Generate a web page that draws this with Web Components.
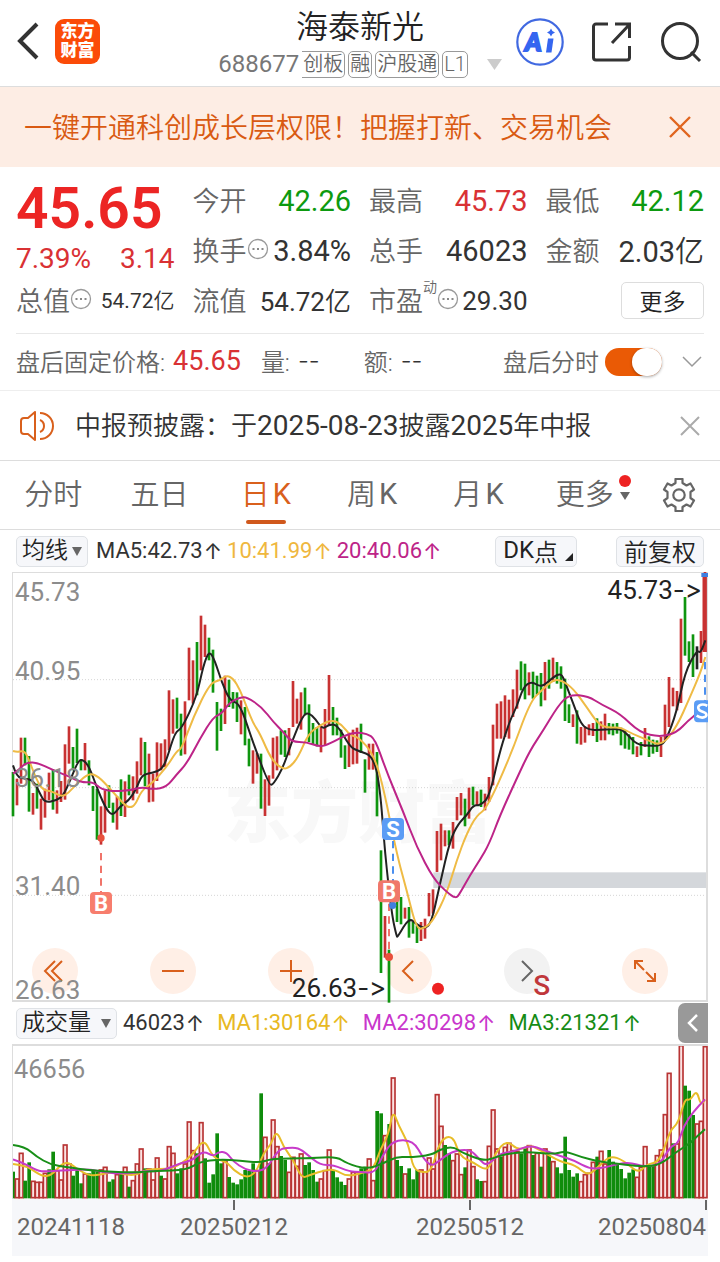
<!DOCTYPE html>
<html lang="zh-CN">
<head>
<meta charset="utf-8">
<meta name="viewport" content="width=device-width, initial-scale=1">
<title>海泰新光 688677</title>
<style>
  body {
    margin: 0;
    background: #fff;
    color: #333;
    font-family: Roboto, "Noto Sans CJK SC", sans-serif;
    font-size: 24px;
  }
</style>
</head>
<body>
<stock-page></stock-page>

<script>
// shared rules, every shadow root starts with them
const BASE = `
  * { box-sizing: border-box; }
  button, select, input { margin: 0; padding: 0; border: 0; background: none; font: inherit; color: inherit; }
  button { display: inline-flex; align-items: center; justify-content: center; cursor: pointer; }
  svg { display: block; fill: none; }
`;

class BaseElement extends HTMLElement {
  constructor() {
    super();
    this.attachShadow({ mode: 'open' });
  }

  connectedCallback() {
    this.shadowRoot.innerHTML = `<style>${BASE}${this.styles()}</style>${this.render()}`;
  }

  styles() { return ''; }
  render() { return ''; }
}

class StockTag extends BaseElement {
  styles() {
    return `
      :host { display: block; border: 1px solid #999; border-radius: 5px; padding: 0 1px;
        font-size: 20px; line-height: 25px; color: #666; font-weight: 350; }
      :host([cut]) { border-left: 0; border-top-left-radius: 0; border-bottom-left-radius: 0; }
    `;
  }
  render() { return '<slot></slot>'; }
}
customElements.define('stock-tag', StockTag);

class StockHeader extends BaseElement {
  styles() {
    return `
      :host { display: grid; grid-template-columns: 1fr auto 1fr; align-items: center;
        height: 87px; border-bottom: 1px solid #ddd; }
      .left { display: flex; align-items: center; gap: 16px; padding: 0 0 4px 17px; }
      .logo { width: 45px; height: 45px; border-radius: 9px; background: #fb4b08; color: #fff; text-decoration: none;
        font-size: 17px; line-height: 19px; font-weight: 900; text-align: center; padding-top: 3px; }
      .mid { text-align: center; }
      h1 { margin: 0; font-size: 32px; line-height: 48px; font-weight: 350; color: #222; }
      .code { display: flex; align-items: center; gap: 3px; font-size: 24px; color: #777; line-height: 27px; margin-bottom: 6px; }
      .code button { margin-left: 16px; }
      .right { display: flex; align-items: center; justify-content: flex-end; gap: 28px; padding: 0 18px 3px 0; }
    `;
  }
  render() {
    return `
      <div class="left">
        <button aria-label="返回"><svg width="22" height="38" viewBox="0 0 22 38" stroke="#333" stroke-width="4"><path d="M20 2 3 19l17 17"/></svg></button>
        <a class="logo" href="#">东方<br>财富</a>
      </div>
      <div class="mid">
        <h1>海泰新光</h1>
        <div class="code">
          <span>688677</span>
          <stock-tag cut>创板</stock-tag><stock-tag>融</stock-tag><stock-tag>沪股通</stock-tag><stock-tag>L1</stock-tag>
          <button aria-label="展开"><svg width="15" height="11" viewBox="0 0 15 11"><path d="M0 0h15L7.500 11z" fill="#ccc"/></svg></button>
        </div>
      </div>
      <div class="right">
        <button aria-label="Ai">
          <svg width="48" height="48" viewBox="0 0 48 48">
            <circle cx="24" cy="24" r="22.700" stroke="#4169e1" stroke-width="2.200"/>
            <text x="9" y="33" fill="#3566f0" stroke="#3566f0" stroke-width="2" font-size="25" font-weight="900" font-style="italic" font-family="Lato, sans-serif">A</text>
            <path d="M32 20.500h5.500L35.500 34.500H30z" fill="#3566f0"/>
            <path d="M35 10.500q.8 3 4 4-3.200 1-4 4-.8-3-4-4 3.200-1 4-4z" fill="#3566f0"/>
          </svg>
        </button>
        <button aria-label="分享">
          <svg width="40" height="40" viewBox="0 0 40 40" stroke="#333" stroke-width="3">
            <path d="M16 2H4a2.500 2.500 0 0 0-2.500 2.500v31A2.500 2.500 0 0 0 4 38h31a2.500 2.500 0 0 0 2.500-2.500V24M20 21 37 3M23 2h14.500v14"/>
          </svg>
        </button>
        <button aria-label="搜索">
          <svg width="42" height="42" viewBox="0 0 42 42" stroke="#333" stroke-width="3">
            <circle cx="20" cy="20" r="17.500"/><path d="m31 31 9 9"/>
          </svg>
        </button>
      </div>
    `;
  }
}
customElements.define('stock-header', StockHeader);

class PromoBanner extends BaseElement {
  styles() {
    return `
      :host { display: flex; align-items: center; justify-content: space-between; height: 80px;
        padding: 0 28px 0 24px; background: #fdede4; color: #d95a12; }
      a { color: inherit; text-decoration: none; font-size: 28px; white-space: nowrap; font-weight: 350; padding-bottom: 2px; }
    `;
  }
  render() {
    return `
      <a href="#"><slot></slot></a>
      <button aria-label="关闭"><svg width="24" height="24" viewBox="0 0 24 24" stroke="#e0651f" stroke-width="2.400"><path d="m2 2 20 20M22 2 2 22"/></svg></button>
    `;
  }
}
customElements.define('promo-banner', PromoBanner);

// one label / value pair, attributes: label, sup, info, tone, unit
class QuoteCell extends BaseElement {
  styles() {
    return `
      :host { display: flex; align-items: center; justify-content: space-between; height: 50px;
        font-size: 29px; color: #333; white-space: nowrap; }
      .label { display: flex; align-items: center; font-size: 27px; color: #666; font-weight: 350; padding-bottom: 4px; }
      .sup { align-self: flex-start; font-size: 14px; line-height: 14px; }
      :host([tone=up]) .value { color: #d93134; }
      :host([tone=down]) .value { color: #0d9a10; }
      :host([small]) .value { font-size: 21px; }
      :host([mid]) .value { font-size: 26px; }
      :host([unit]) .value { padding-bottom: 4px; }
      .unit { font-weight: 350; }
    `;
  }
  render() {
    const info = this.hasAttribute('info')
      ? `<svg width="22" height="22" viewBox="0 0 22 22"><circle cx="11" cy="11" r="9.500" stroke="#999" stroke-width="1.300"/><path d="M5.500 10h2v2h-2zm4.500 0h2v2h-2zm4.500 0h2v2h-2z" fill="#888"/></svg>` : '';
    const sup = this.getAttribute('sup');
    const unit = this.getAttribute('unit') || '';
    return `
      <span class="label">${this.getAttribute('label')}${sup ? `<span class="sup">${sup}</span>` : ''}${info}</span>
      <span class="value"><slot></slot><span class="unit">${unit}</span></span>
    `;
  }
}
customElements.define('quote-cell', QuoteCell);

class QuotePanel extends BaseElement {
  styles() {
    return `
      :host { display: grid; grid-template-columns: repeat(4, 1fr); column-gap: 18px; margin: 0 16px; padding: 9px 0 7px;
        border-bottom: 1px solid #e8e8e8; }
      .price { font-size: 57px; line-height: 66px; font-weight: 600; color: #ec2524; }
      .change { display: flex; justify-content: space-between; font-size: 28px; line-height: 34px; color: #d93134; }
      .more { width: 83px; height: 37px; margin: 6px 0 7px; padding-bottom: 2px; border: 1px solid #ddd; border-radius: 5px; font-size: 23px; color: #222; justify-self: end; font-weight: 350; }
      .col { display: grid; }
    `;
  }
  render() {
    return `
      <div>
        <div class="price">45.65</div>
        <div class="change"><span>7.39%</span><span>3.14</span></div>
        <quote-cell label="总值" info small unit="亿">54.72</quote-cell>
      </div>
      <div>
        <quote-cell label="今开" tone="down">42.26</quote-cell>
        <quote-cell label="换手" info>3.84%</quote-cell>
        <quote-cell label="流值" mid unit="亿">54.72</quote-cell>
      </div>
      <div>
        <quote-cell label="最高" tone="up">45.73</quote-cell>
        <quote-cell label="总手">46023</quote-cell>
        <quote-cell label="市盈" sup="动" info mid>29.30</quote-cell>
      </div>
      <div class="col">
        <quote-cell label="最低" tone="down">42.12</quote-cell>
        <quote-cell label="金额" unit="亿">2.03</quote-cell>
        <button class="more">更多</button>
      </div>
    `;
  }
}
customElements.define('quote-panel', QuotePanel);

class AfterHours extends BaseElement {
  styles() {
    return `
      :host { display: flex; align-items: center; height: 57px; padding: 0 18px 0 16px; border-bottom: 1px solid #eee;
        font-size: 24px; color: #666; white-space: nowrap; font-weight: 350; }
      .fixed b { font-weight: 400; font-size: 27px; color: #d93134; }
      .fixed, .pair { display: flex; align-items: center; gap: 8px; padding-bottom: 3px; }
      .pair { margin-left: 20px; }
      .pair + .pair { margin-left: 44px; }
      .pair i { font-style: normal; font-family: Inter, sans-serif; color: #333; }
      label { display: flex; align-items: center; gap: 6px; margin-left: auto; }
      label span { padding-bottom: 3px; }
      input { appearance: none; display: flex; width: 57px; height: 28px; border-radius: 14px; background: #ea5a05; justify-content: flex-end; }
      input::before { content: ""; width: 30px; height: 28px; border-radius: 14px; background: #fff; box-shadow: 0 1px 3px #0005; }
      input:not(:checked) { background: #ccc; justify-content: flex-start; }
      button { margin-left: 20px; }
    `;
  }
  render() {
    return `
      <span class="fixed">盘后固定价格: <b>45.65</b></span>
      <span class="pair">量: <i>--</i></span>
      <span class="pair">额: <i>--</i></span>
      <label><span>盘后分时</span><input type="checkbox" role="switch" checked></label>
      <button aria-label="展开"><svg width="20" height="12" viewBox="0 0 20 12" stroke="#999" stroke-width="1.500"><path d="m1 1 9 9 9-9"/></svg></button>
    `;
  }
}
customElements.define('after-hours', AfterHours);

class NoticeBar extends BaseElement {
  styles() {
    return `
      :host { display: flex; align-items: center; height: 70px; padding: 0 20px; border-bottom: 1px solid #ddd; }
      a { margin-left: 21px; padding-bottom: 4px; color: #333; text-decoration: none; font-size: 26px; white-space: nowrap; font-weight: 350; }
      ::slotted(span) { font-size: 28px; font-weight: 400; }
      button { margin-left: auto; }
    `;
  }
  render() {
    return `
      <svg width="34" height="30" viewBox="0 0 34 30" stroke="#d9601c" stroke-width="2">
        <path d="M1 10q0-3 3-3h4l7-6v28l-7-6H4q-3 0-3-3z" stroke-linejoin="round"/>
        <path d="M20 9a6.500 6.500 0 0 1 0 12M20 2a13 13 0 0 1 0 26"/>
      </svg>
      <a href="#"><slot></slot></a>
      <button aria-label="关闭"><svg width="20" height="20" viewBox="0 0 20 20" stroke="#aaa" stroke-width="2"><path d="m1 1 18 18M19 1 1 19"/></svg></button>
    `;
  }
}
customElements.define('notice-bar', NoticeBar);

class PeriodTabs extends BaseElement {
  styles() {
    return `
      :host { display: flex; height: 69px; border-bottom: 1px solid #ddd; color: #666; font-size: 29px; font-weight: 350; }
      .tabs { display: flex; flex: 1; }
      .tabs button { flex: 1 1 0; position: relative; gap: 3px; padding-bottom: 6px; }
      .tabs button span { font-weight: 400; padding-top: 4px; }
      .on { color: #d9601c; }
      .on::after { content: ""; position: absolute; bottom: 5px; width: 40px; height: 4px; border-radius: 2px; background: #d0581c; }
      .dot { position: absolute; left: 87px; top: 14px; }
      .gear { width: 82px; }
    `;
  }
  render() {
    return `
      <div class="tabs" role="tablist">
        <button role="tab">分时</button>
        <button role="tab">五日</button>
        <button role="tab" class="on" aria-selected="true">日<span>K</span></button>
        <button role="tab">周<span>K</span></button>
        <button role="tab">月<span>K</span></button>
        <button role="tab">更多<svg class="dot" width="12" height="26" viewBox="0 0 12 26"><circle cx="6" cy="6" r="6" fill="#ee2222"/><path d="M1 17h10L6 25z" fill="#666"/></svg></button>
      </div>
      <button class="gear" aria-label="设置">
        <svg width="34" height="34" viewBox="0 0 34 34" stroke="#666" stroke-width="2.200" stroke-linejoin="round">
          <circle cx="17" cy="17" r="5.700"/>
          <path d="M13.500 1h7v4l4 2.500 4-2 3.500 6-3.500 2.500v6l3.500 2.500-3.500 6-4-2-4 2.500v4h-7v-4l-4-2.500-4 2-3.500-6L5.500 20v-6L2 11.500l3.500-6 4 2L13.500 5z"/>
        </svg>
      </button>
    `;
  }
}
customElements.define('period-tabs', PeriodTabs);

// drop-down that picks the indicator
class IndicatorSelect extends BaseElement {
  styles() {
    return `
      :host { display: block; position: relative; color: #222; font-weight: 350; }
      select { appearance: none; display: block; height: 31px; padding: 0 19px 0 5px; border: 1px solid #dfe2e6; border-radius: 5px;
        background: #f6f7fa; font-size: 23px; line-height: 28px; }
      :host([wide]) select { padding-right: 25px; }
      svg { position: absolute; right: 6px; top: 11px; pointer-events: none; }
    `;
  }
  render() {
    const name = this.getAttribute('name');
    return `<select aria-label="指标"><option>${name}</option></select>
      <svg width="10" height="9" viewBox="0 0 10 9"><path d="M0 0h10L5 9z" fill="#666"/></svg>`;
  }
}
customElements.define('indicator-select', IndicatorSelect);

class MaValue extends BaseElement {
  styles() {
    return `
      :host { display: flex; align-items: center; gap: 1px; font-size: 22px; line-height: 28px; white-space: nowrap; }
      .arrow { font-family: Inter, sans-serif; }
    `;
  }
  render() { return '<slot></slot><span class="arrow">↑</span>'; }
}
customElements.define('ma-value', MaValue);

// drawing units: three per pixel, left edge of the box at 36
const STEP = 12;
const FIRST = 39;
const RED = '#c83232', GREEN = '#0f950f';

const path = (pts) => {
  // smooth polyline, quadratic through the middle points
  const p = pts.trim().split(/\s+/).map((s) => s.split(',').map(Number));
  let d = `M${p[0]}`;
  for (let i = 1; i < p.length - 1; i++) {
    d += `Q${p[i]} ${(p[i][0] + p[i + 1][0]) / 2},${(p[i][1] + p[i + 1][1]) / 2}`;
  }
  return d + `L${p[p.length - 1]}`;
};

// colour, high, low
const CANDLES = `
g605-738 r625-705 r502-640 g502-585 g557-724 r668-733 g640-715 r685-778 r655-742 r607-690
g597-718 r660-730 r632-695 r522-688 r468-580 g530-600 g475-578 g567-600 r518-600 g570-645
g647-722 g655-808 r708-823 r660-787 g645-713 g697-757 r678-778 g627-737 r633-740 g613-675
r618-690 r573-670 r502-615 g515-648 r550-696 r610-694 r516-632 r519-600 r507-590 r360-540
r387-490 g382-475 g430-556 r393-552 r232-390 r270-400 g215-375 r136-300 r163-260 g202-270
g238-367 g395-541 g415-482 r316-461 g328-410 g365-415 g366-455 r390-492 g410-525 g505-588
r540-640 r548-610 g550-715 r627-737 r615-706 r502-625 r498-600 g480-553 g480-560 r473-555
r332-470 r385-460 r366-478 g352-435 g402-515 g458-522 g470-528 r468-546 r416-525 r314-465
g410-495 g442-495 g478-562 g525-596 r487-590 r478-582 r472-580 g460-548 g567-667 r520-598
r520-598 g545-738 g840-1208 r1037-1162 g1138-1297 g985-1010 g975-1055 g980-1062 r1012-1045 g1010-1102
g1055-1090 g1065-1118 r1055-1112 r1045-1105 r968-1038 r957-1030 r782-905 r760-870 r780-828 g780-825
r755-835 r680-750 r668-735 g685-768 r652-745 g649-705 r663-705 g658-710 r670-720 r620-695
r463-645 r400-505 r393-505 r375-500 r388-505 r357-440 r298-415 g273-360 g280-387 r306-375
g304-385 g316-373 g308-408 r275-390 g268-355 r262-335 g275-340 g288-355 g325-452 g402-458
r432-470 g420-520 r470-523 r468-517 r462-495 r458-497 g444-515 r453-510 r430-510 g458-492
g460-495 g458-490 g472-525 g480-535 g492-538 g500-552 r528-560 g515-555 r473-530 g498-560
g508-550 g510-545 r500-560 r403-510 r320-470 r352-408 r362-420 r145-398 g80-256 g213-275
g192-320 k228-297 r182-278 r5-245`;

const MA5 = `39,585 50,620 75,625 100,630 120,670 135,697 170,690 190,675 210,632 235,570 250,568 268,590 290,650 315,710 337,738
360,708 385,692 410,655 425,613 460,607 485,597 500,568 525,485 545,475 590,380 610,285 628,240 645,272 665,335 690,392 720,400
760,520 808,645 820,642 850,590 875,515 910,432 927,428 945,445 968,477 985,463 1012,462 1050,530 1075,542 1120,557 1140,650
1155,850 1175,1030 1190,1100 1194,1098 1227,1042 1250,1062 1275,1076 1295,1055 1320,940 1350,810 1375,760 1400,735 1420,705
1440,705 1468,680 1500,540 1530,450 1550,410 1570,350 1595,333 1625,352 1660,320 1683,308 1695,335 1720,400 1743,463 1770,480
1805,478 1860,475 1880,490 1910,523 1950,527 1985,525 2000,505 2030,425 2055,305 2090,240 2102,248 2116,210`;
const MA10 = `39,542 50,545 68,542 80,550 110,630 130,660 155,662 190,682 220,652 265,607 295,618 330,655 375,705 390,712 405,705
425,660 455,640 500,590 530,542 545,535 580,440 630,338 660,330 680,315 700,325 720,358 740,410 760,460 780,490 815,570 850,597
870,590 895,560 925,490 960,465 995,448 1025,462 1050,495 1075,500 1120,550 1150,650 1190,850 1220,960 1250,1078 1275,1073
1300,1050 1340,970 1370,870 1400,790 1430,735 1460,715 1530,560 1590,395 1625,360 1660,328 1685,330 1720,355 1760,410 1795,462
1825,473 1860,470 1885,485 1940,508 1985,527 2030,470 2070,380 2100,310 2116,260`;
const MA20 = `39,610 60,595 80,575 115,578 160,600 200,615 245,637 280,635 305,658 345,663 390,660 425,650 460,657 500,650 530,612
560,580 600,505 640,440 665,430 690,395 720,382 740,380 785,410 820,455 850,485 875,515 920,515 960,530 990,520 1040,493 1070,486
1100,490 1125,505 1160,605 1210,725 1250,830 1300,925 1340,965 1368,985 1380,968 1410,915 1440,868 1468,820 1500,735 1550,625
1590,540 1630,480 1675,405 1708,372 1765,378 1805,403 1860,430 1920,487 1980,500 2030,487 2065,450 2095,427 2116,390`;

class KlineChart extends BaseElement {
  styles() {
    return `
      :host { display: block; position: relative; margin: 0 12px; border: 1px solid #ddd; border-width: 1px 2px 2px 1px; }
      .chart { position: relative; width: 100%; overflow: visible; pointer-events: none; font-family: inherit; }
      .ext { font-family: Inter, sans-serif; font-size: 78px; font-feature-settings: "calt" 0; }
      .tools { position: absolute; left: 19px; right: 38px; bottom: 6px; display: flex; justify-content: space-between; }
      .tools button { width: 46px; height: 46px; border-radius: 23px; background: #ffefe6; }
      .tools button.off { background: #f2f2f2; }
    `;
  }
  candles() {
    return CANDLES.trim().split(/\s+/).map((c, i) => {
      const [hi, lo] = c.slice(1).split('-').map(Number);
      const x = FIRST + STEP * i;
      const col = { r: RED, g: GREEN, k: '#222' }[c[0]];
      return `<path d="M${x} ${hi}V${lo}" stroke="${col}"/>`;
    }).join('');
  }
  mark(x, y, letter, col) {
    return `<rect x="${x - 33}" y="${y - 33}" width="66" height="66" rx="12" fill="${col}"/>
      <text x="${x}" y="${y + 24}" font-size="66" font-weight="700" fill="#fff" text-anchor="middle">${letter}</text>`;
  }
  render() {
    const icon = (d, col = '#d9601c') => `<svg width="26" height="26" viewBox="0 0 26 26" stroke="${col}" stroke-width="2"><path d="${d}"/></svg>`;
    return `
      <div class="tools">
        <button aria-label="最前">${icon('M13 3 3 13l10 10M20 3 10 13l10 10')}</button>
        <button aria-label="缩小">${icon('M2 13h22')}</button>
        <button aria-label="放大">${icon('M2 13h22M13 2v22')}</button>
        <button aria-label="向前">${icon('M17 3 7 13l10 10')}</button>
        <button aria-label="向后" class="off">${icon('M8 3l10 10L8 23', '#666')}</button>
        <button aria-label="全屏">${icon('M3 11V3h8M3 3l9 9M23 15v8h-8M23 23l-9-9')}</button>
      </div>
      <svg class="chart" viewBox="39 8 2079 1281">
        <text x="672" y="800" font-size="201" font-weight="900" fill="#f8f8f8">东方财富</text>
        <rect x="1300" y="906" width="818" height="47" fill="#d4d7db"/>
        <path d="M39 328H2118M39 652H2118M39 975H2118" stroke="#d5d5d5" stroke-width="3" stroke-dasharray="3 6"/>
        <g stroke-width="8">${this.candles()}</g>
        <path d="M2114 8V245" stroke="${RED}" stroke-width="13"/>
        <g stroke-width="6" stroke-linejoin="round">
          <path d="${path(MA5)}" stroke="#222"/>
          <path d="${path(MA10)}" stroke="#efbb45"/>
          <path d="${path(MA20)}" stroke="#bd2488"/>
        </g>
        <g stroke-width="6" stroke-dasharray="22 16">
          <path d="M303 848V965M1167 1000V1150" stroke="#f0746a"/>
          <path d="M1179 812V1000M2115 275V392" stroke="#4a8ff0"/>
        </g>
        <g fill="#e8503c"><circle cx="303" cy="803" r="11"/><circle cx="1167" cy="1160" r="12"/></g>
        <g fill="#3f7fe0"><circle cx="1178" cy="1005" r="11"/><path d="M2104 8h20v12h-20z"/></g>
        ${this.mark(303, 998, 'B', '#f77d6d')}
        ${this.mark(1179, 776, 'S', '#5a9cf5')}
        ${this.mark(1167, 963, 'B', '#f0776a')}
        <path d="M2124 390h-30q-12 0-12 12v42q0 12 12 12h30z" fill="#5a9cf5"/>
        <path d="M2122 406c-20-9-34 2-24 13 5 5 12 5 18 9 11 10-8 20-26 8" stroke="#fff" stroke-width="8"/>
        <g font-size="78" fill="#8c8c8c">
          <text x="45" y="93">45.73</text>
          <text x="45" y="328">40.95</text>
          <text x="45" y="650">36.18</text>
          <text x="45" y="975">31.40</text>
          <text x="45" y="1286">26.63</text>
        </g>
        <g font-size="78" fill="#222" text-anchor="end">
          <text x="1159" y="1281">26.63<tspan class="ext">-&gt;</tspan></text>
          <text x="2106" y="87">45.73<tspan class="ext">-&gt;</tspan></text>
        </g>
        <circle cx="1314" cy="1255" r="18" fill="#ee2222"/>
        <text x="1600" y="1274" font-size="84" font-weight="500" fill="#c0373b">S</text>
      </svg>
    `;
  }
}
customElements.define('kline-chart', KlineChart);

// colour and top of each volume bar, the base line is at 595
const BARS = `
g515 r535 r458 g542 g487 r542 r545 r545 r518 g508 g455 r510 r538 r433 r490 g527 g510 g550 r520 g520
g510 g515 r508 r500 g545 g538 r522 g520 r500 g560 r540 r490 r445 g505 r505 r538 r472 g527 r535 r438
r458 g520 g505 r490 r364 r450 g460 r366 g475 g548 g523 g400 g490 r480 g531 g548 g553 g538 g510 g512
g490 r510 g280 r410 g490 r358 r438 g468 g480 r515 r470 r497 r460 g495 g487 g510 g545 r535 r510 r448
g510 g532 g545 g555 r535 r515 r515 g505 g500 r475 r540 g333 g340 r405 g372 r232 g480 g498 r520 g505
g538 g510 r508 r515 r472 r505 r282 r377 g435 g460 r480 r460 r522 g502 r448 r498 g538 g543 r543 r437
r328 r445 g470 r440 r428 r450 r452 g460 g445 r435 g465 r458 g500 r445 g465 r483 g502 g520 g410 g510
g530 g520 r543 r522 r518 r485 g470 r452 r490 g450 g485 g490 g507 g535 g518 g508 r530 r500 r438 g495
g495 r465 r448 r342 r218 g430 r430 r135 g257 g272 g345 r370 r362 r138`;

const V5 = `39,492 80,498 105,515 130,530 155,525 185,492 205,487 225,502 265,527 300,525 340,515 380,525 410,525 440,508 480,508
515,505 545,490 580,462 612,415 640,475 680,485 700,510 740,535 770,515 790,460 812,435 830,390 850,440 880,480 905,535 930,525
975,510 1005,508 1040,530 1090,518 1120,508 1140,450 1165,405 1179,330 1195,375 1225,430 1240,508 1270,518 1295,512 1320,420
1358,405 1380,470 1420,487 1463,515 1485,460 1520,420 1555,452 1590,435 1620,450 1680,485 1725,495 1765,528 1795,500 1830,467
1870,480 1915,520 1940,493 1980,485 2010,390 2035,370 2055,295 2070,302 2090,270 2102,315 2115,300`;
const V10 = `39,478 70,488 110,512 140,515 200,510 270,508 300,515 340,520 400,520 440,512 480,515 540,490 575,482 610,452 640,470
655,455 680,457 700,485 735,508 770,515 800,505 835,450 860,443 895,443 920,462 960,495 1000,495 1050,515 1080,515 1125,520
1145,470 1180,420 1240,422 1270,475 1295,500 1320,480 1355,455 1410,447 1440,480 1460,498 1500,460 1540,455 1590,435 1630,450
1680,468 1720,480 1770,508 1820,502 1850,492 1890,487 1930,500 1980,495 2010,440 2035,430 2050,380 2080,335 2115,298`;
const V20 = `39,435 75,440 110,470 150,493 200,502 280,512 340,515 400,518 470,513 560,510 600,485 660,478 720,482 780,488 810,478
870,475 930,475 1010,470 1040,490 1100,508 1150,490 1190,470 1230,472 1295,465 1320,448 1360,440 1390,460 1450,482 1480,475
1510,463 1580,455 1660,463 1695,453 1740,470 1800,485 1880,495 1930,500 1980,495 2030,455 2070,430 2090,410 2115,388`;

class VolumeChart extends BaseElement {
  styles() {
    return `
      :host { display: block; margin: 0 12px; }
      svg { width: 100%; }
      .box { border: 1px solid #ddd; border-width: 2px 0 0 1px; }
      .axis { background: #f6f7fa; }
    `;
  }
  bars() {
    return BARS.trim().split(/\s+/).map((b, i) => {
      const x = FIRST + STEP * i;
      const top = Number(b.slice(1));
      return b[0] === 'r'
        ? `<rect x="${x - 5}" y="${top + 2}" width="11" height="${591 - top}" fill="#fbe3e3" stroke="#b83434" stroke-width="5"/>`
        : `<rect x="${x - 5}" y="${top}" width="11" height="${595 - top}" fill="#0f8c0c"/>`;
    }).join('');
  }
  render() {
    return `
      <div class="box">
        <svg viewBox="39 138 2085 459">
          ${this.bars()}
          <g stroke-width="6" stroke-linejoin="round">
            <path d="${path(V5)}" stroke="#e8bd2a"/>
            <path d="${path(V10)}" stroke="#c73bc9"/>
            <path d="${path(V20)}" stroke="#188f18"/>
          </g>
          <text x="42" y="233" font-size="76" fill="#8c8c8c">46656</text>
        </svg>
      </div>
      <svg class="axis" viewBox="12 0 696 57">
        <path d="M234 1v10M470 1v10M706 1v10" stroke="#666" stroke-width="2"/>
        <g font-size="24" fill="#666">
          <text x="17" y="36">20241118</text>
          <text x="234" y="36" text-anchor="middle">20250212</text>
          <text x="470" y="36" text-anchor="middle">20250512</text>
          <text x="706" y="36" text-anchor="end">20250804</text>
        </g>
      </svg>
    `;
  }
}
customElements.define('volume-chart', VolumeChart);

class StockPage extends BaseElement {
  styles() {
    return `
      :host { display: block; padding-bottom: 6px; }
      .bar { display: flex; align-items: center; height: 42px; padding: 0 16px; }
      .values { display: flex; gap: 5px; margin-left: 8px; color: #333; }
      .chip { height: 31px; border: 1px solid #dfe2e6; border-radius: 5px; background: #f6f7fa;
        font-size: 24px; font-weight: 350; color: #222; padding: 0 7px 2px; }
      .chip span { font-weight: 400; }
      .chip svg { margin: 14px 0 0 7px; }
      .dk { margin: 0 39px 0 auto; padding-right: 3px; }
      .vol { padding-right: 12px; }
      .vol .values { gap: 13px; margin-left: 6px; }
      .side { width: 30px; height: 40px; margin-left: auto; background: #999; border-radius: 7px 0 0 7px; }
    `;
  }
  render() {
    return `
      <stock-header></stock-header>
      <promo-banner>一键开通科创成长层权限！把握打新、交易机会</promo-banner>
      <quote-panel></quote-panel>
      <after-hours></after-hours>
      <notice-bar>中报预披露：于<span>2025-08-23</span>披露<span>2025</span>年中报</notice-bar>
      <period-tabs></period-tabs>
      <div class="bar">
        <indicator-select name="均线"></indicator-select>
        <div class="values">
          <ma-value>MA5:42.73</ma-value>
          <ma-value style="color:#efb73e">10:41.99</ma-value>
          <ma-value style="color:#bd2488">20:40.06</ma-value>
        </div>
        <button class="chip dk"><span>DK</span>点<svg width="8" height="8" viewBox="0 0 8 8"><path d="M8 0v8H0z" fill="#222"/></svg></button>
        <button class="chip">前复权</button>
      </div>
      <kline-chart></kline-chart>
      <div class="bar vol">
        <indicator-select name="成交量" wide></indicator-select>
        <div class="values">
          <ma-value>46023</ma-value>
          <ma-value style="color:#e8b923">MA1:30164</ma-value>
          <ma-value style="color:#c936cc">MA2:30298</ma-value>
          <ma-value style="color:#158c15">MA3:21321</ma-value>
        </div>
        <button class="side" aria-label="收起"><svg width="12" height="18" viewBox="0 0 12 18" stroke="#fff" stroke-width="2.500"><path d="m10 1-8 8 8 8"/></svg></button>
      </div>
      <volume-chart></volume-chart>
    `;
  }
}
customElements.define('stock-page', StockPage);
</script>
</body>
</html>
